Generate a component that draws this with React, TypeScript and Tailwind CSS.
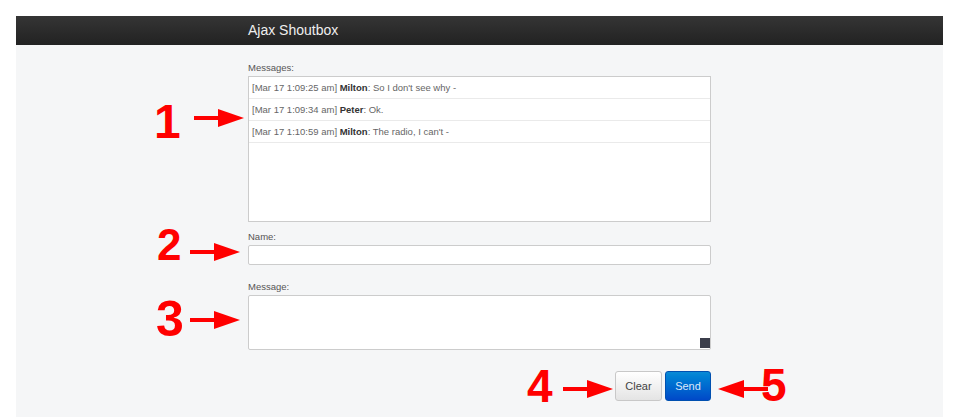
import React from 'react';

type Shout = { time: string; name: string; text: string };

const shouts: Shout[] = [
  { time: 'Mar 17 1:09:25 am', name: 'Milton', text: "So I don't see why -" },
  { time: 'Mar 17 1:09:34 am', name: 'Peter', text: 'Ok.' },
  { time: 'Mar 17 1:10:59 am', name: 'Milton', text: "The radio, I can't -" },
];

const Arrow: React.FC<{ className: string; flip?: boolean }> = ({ className, flip }) => (
  <svg
    className={`absolute ${className}`}
    width="50"
    height="20"
    viewBox="0 0 50 20"
    style={flip ? { transform: 'scaleX(-1)' } : undefined}
  >
    <rect x="0" y="8" width="27" height="4" fill="#ff0000" />
    <polygon points="24,1 50,10 24,19" fill="#ff0000" />
  </svg>
);

const App: React.FC = () => {
  return (
    <div className="relative min-h-screen bg-white pl-4 pr-[18px] pt-4 font-['Liberation_Sans',Arial,sans-serif]">
      <div className="h-[29px] bg-linear-to-b from-[#353535] to-[#222] shadow-[0_1px_0_#111]">
        <div className="mx-auto w-[463px] text-[14px] leading-[29px] text-[#eee]">Ajax Shoutbox</div>
      </div>

      <div className="h-[372px] bg-[#f5f6f7] pt-[14px]">
        <div className="mx-auto w-[463px]">
          <label className="block h-[17px] text-[9.5px] leading-[17px] text-[#555]">Messages:</label>
          <div className="h-[146px] border border-[#ccc] bg-white">
            {shouts.map((s, i) => (
              <div key={i} className="h-[22px] border-b border-[#eaeaea] pl-[3px] text-[9.5px] leading-[22px] text-[#666]">
                [{s.time}] <b className="text-[#333]">{s.name}</b>: {s.text}
              </div>
            ))}
          </div>

          <label className="mt-[6px] block h-[17px] text-[9.5px] leading-[17px] text-[#555]">Name:</label>
          <input className="block h-[20px] w-full rounded-[2px] border border-[#ccc] bg-white" />

          <label className="mt-[13px] block h-[17px] text-[9.5px] leading-[17px] text-[#555]">Message:</label>
          <div className="relative">
            <textarea className="block h-[55px] w-full resize-none rounded-[2px] border border-[#ccc] bg-white" />
            <span className="absolute bottom-[2px] right-[1px] h-[10px] w-[10px] bg-[#3b3e4b]" />
          </div>

          <div className="mt-[21px] flex justify-end gap-[3px]">
            <button className="h-[30px] w-[47px] rounded-[3px] border border-[#c8c8c8] bg-linear-to-b from-white to-[#e4e4e4] text-[11px] text-[#444]">
              Clear
            </button>
            <button className="h-[30px] w-[46px] rounded-[3px] border border-[#0050b0] bg-linear-to-b from-[#0a8ad6] to-[#0048c8] text-[11px] text-[#dce9f8]">
              Send
            </button>
          </div>
        </div>
      </div>

      {/* red annotations laid over the screenshot */}
      <span className="absolute left-[154px] top-[98px] text-[48px] font-bold leading-none text-[#ff0000]">1</span>
      <Arrow className="left-[194px] top-[108px]" />
      <span className="absolute left-[157px] top-[223px] text-[44px] font-bold leading-none text-[#ff0000]">2</span>
      <Arrow className="left-[190px] top-[242px]" />
      <span className="absolute left-[156px] top-[294px] text-[50px] font-bold leading-none text-[#ff0000]">3</span>
      <Arrow className="left-[190px] top-[310px]" />
      <span className="absolute left-[527px] top-[363px] text-[46px] font-bold leading-none text-[#ff0000]">4</span>
      <Arrow className="left-[563px] top-[379px]" />
      <Arrow className="left-[718px] top-[379px]" flip />
      <span className="absolute left-[761px] top-[362px] text-[46px] font-bold leading-none text-[#ff0000]">5</span>
    </div>
  );
};

export default App;
